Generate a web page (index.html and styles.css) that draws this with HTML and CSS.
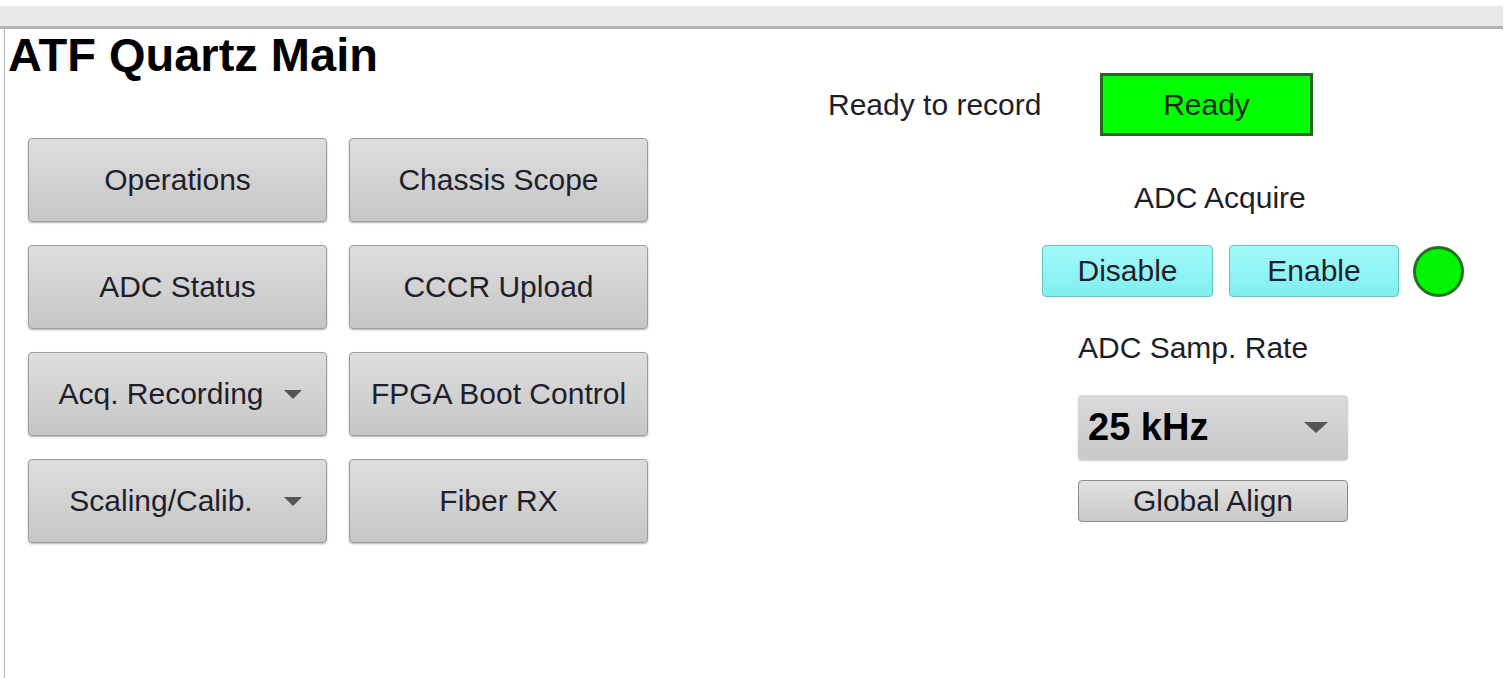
FILE: index.html
```html
<!DOCTYPE html>
<html>
<head>
<meta charset="utf-8">
<link rel="stylesheet" href="styles.css">
</head>
<body>
<div class="topbar"></div>
<div class="page">
  <div class="left">
    <h1 class="title">ATF Quartz Main</h1>
    <div class="grid">
      <div class="btn">Operations</div>
      <div class="btn">Chassis Scope</div>
      <div class="btn">ADC Status</div>
      <div class="btn">CCCR Upload</div>
      <div class="btn menu"><span class="menu-text">Acq. Recording</span><span class="menu-arrow"><svg width="18" height="9" viewBox="0 0 18 9"><path d="M0 0H18L9 9Z" fill="#555"/></svg></span></div>
      <div class="btn">FPGA Boot Control</div>
      <div class="btn menu"><span class="menu-text">Scaling/Calib.</span><span class="menu-arrow"><svg width="18" height="9" viewBox="0 0 18 9"><path d="M0 0H18L9 9Z" fill="#555"/></svg></span></div>
      <div class="btn">Fiber RX</div>
    </div>
  </div>
  <div class="right">
    <div class="status-row">
      <span class="status-label">Ready to record</span>
      <div class="ready-box">Ready</div>
    </div>
    <div class="acq-label">ADC Acquire</div>
    <div class="acq-row">
      <div class="cyan-btn">Disable</div>
      <div class="cyan-btn enable">Enable</div>
      <div class="led"></div>
    </div>
    <div class="rate-label">ADC Samp. Rate</div>
    <div class="rate-select">
      <span class="rate-value">25 kHz</span>
      <svg class="rate-arrow" width="24" height="11" viewBox="0 0 24 11"><path d="M0 0H24L12 11Z" fill="#555"/></svg>
    </div>
    <div class="align-btn">Global Align</div>
  </div>
</div>
</body>
</html>
```
FILE: styles.css
```css
html, body {
  margin: 0;
  padding: 0;
  background: #ffffff;
  font-family: "Liberation Sans", Arial, sans-serif;
  color: #1e1e28;
}

.topbar {
  margin-top: 6px;
  margin-right: 9px;
  height: 20px;
  background: #e9e9e9;
  border-bottom: 3px solid #b3b3b3;
}

.page {
  display: flex;
  margin-left: 4px;
  border-left: 1px solid #b5b5b5;
  height: 649px;
}

.left {
  width: 823px;
  flex: none;
}

.title {
  margin: 0 0 0 3px;
  font-size: 47px;
  line-height: 52px;
  font-weight: bold;
  color: #000;
}

.grid {
  margin: 57px 0 0 23px;
  display: grid;
  grid-template-columns: 299px 299px;
  grid-auto-rows: 84px;
  column-gap: 22px;
  row-gap: 23px;
}

.btn {
  box-sizing: border-box;
  display: flex;
  align-items: center;
  justify-content: center;
  font-size: 30px;
  color: #1e1e2c;
  background: linear-gradient(#dedede, #c6c6c6);
  border: 1px solid #9c9c9c;
  border-radius: 4px;
  box-shadow: 0 1px 2px rgba(0, 0, 0, 0.3);
}

.btn.menu {
  justify-content: flex-start;
  padding-left: 20px;
}

.menu-text {
  width: 224px;
  text-align: center;
}

.menu-arrow {
  width: 40px;
  display: flex;
  justify-content: center;
  align-items: center;
}

.right {
  display: flex;
  flex-direction: column;
  align-items: flex-start;
}

.status-row {
  margin-top: 44px;
  height: 63px;
  display: flex;
  align-items: center;
}

.status-label {
  width: 272px;
  font-size: 30px;
}

.ready-box {
  box-sizing: border-box;
  width: 213px;
  height: 63px;
  background: #00ff00;
  border: 3px solid #1f6b1f;
  display: flex;
  align-items: center;
  justify-content: center;
  font-size: 30px;
  color: #0e2a0e;
}

.acq-label {
  margin: 46px 0 0 306px;
  font-size: 30px;
  line-height: 32px;
}

.acq-row {
  margin: 31px 0 0 214px;
  display: flex;
  align-items: center;
}

.cyan-btn {
  box-sizing: border-box;
  width: 171px;
  height: 52px;
  display: flex;
  align-items: center;
  justify-content: center;
  font-size: 30px;
  color: #1e1e2c;
  background: linear-gradient(#a2f9f9, #80efef);
  border: 1px solid #5ec6c6;
  border-radius: 4px;
}

.cyan-btn.enable {
  margin-left: 16px;
  width: 170px;
}

.led {
  box-sizing: border-box;
  margin-left: 14px;
  width: 51px;
  height: 51px;
  border-radius: 50%;
  background: #00f500;
  border: 3px solid #217321;
}

.rate-label {
  margin: 35px 0 0 250px;
  font-size: 30px;
  line-height: 32px;
}

.rate-select {
  box-sizing: border-box;
  margin: 31px 0 0 250px;
  width: 270px;
  height: 65px;
  padding: 0 20px 0 10px;
  display: flex;
  align-items: center;
  justify-content: space-between;
  background: linear-gradient(#dadada, #c8c8c8);
  border-radius: 4px;
  box-shadow: 0 1px 2px rgba(0, 0, 0, 0.2);
}

.rate-value {
  font-size: 38px;
  font-weight: bold;
  color: #000;
}

.align-btn {
  box-sizing: border-box;
  margin: 20px 0 0 250px;
  width: 270px;
  height: 42px;
  display: flex;
  align-items: center;
  justify-content: center;
  font-size: 30px;
  color: #1e1e2c;
  background: linear-gradient(#e2e2e2, #c8c8c8);
  border: 1px solid #8c8c8c;
  border-radius: 4px;
}
```
